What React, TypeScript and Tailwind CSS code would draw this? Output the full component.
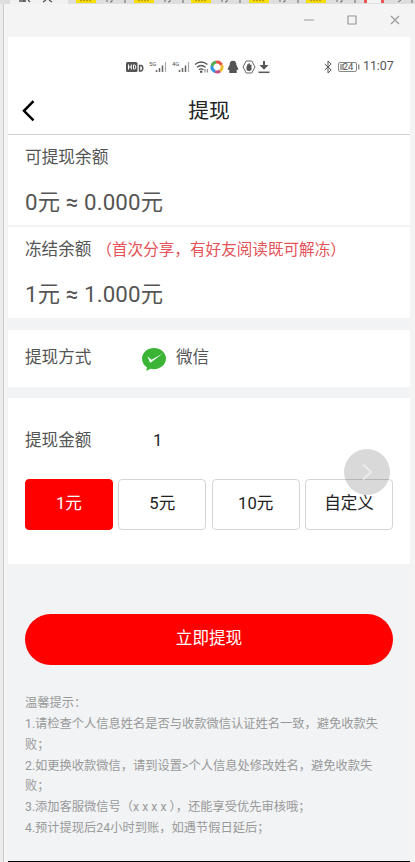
import React from 'react';

const amounts = ['1元', '5元', '10元', '自定义'];

const tips = [
  { text: '温馨提示：', cls: '' },
  { text: '1.请检查个人信息姓名是否与收款微信认证姓名一致，避免收款失', cls: '' },
  { text: '败；', cls: '' },
  { text: '2.如更换收款微信，请到设置>个人信息处修改姓名，避免收款失', cls: '' },
  { text: '败；', cls: '' },
  { text: '3.添加客服微信号（x x x x ），还能享受优先审核哦；', cls: '' },
  { text: '4.预计提现后24小时到账，如遇节假日延后；', cls: '' },
];

function BackgroundTabs() {
  return (
    <svg className="block h-1 w-full shrink-0" viewBox="0 0 415 4" preserveAspectRatio="none">
      <rect width="415" height="4" fill="#dedede" />
      <rect x="10" width="58" height="4" fill="#f1f1f1" />
      <path d="M19 1h7M24 0v2M28 0l2 2M46 0l-3 2M49 0l3 2" stroke="#555" strokeWidth="1.3" />
      {[76, 134, 191, 249, 306].map((x) => (
        <g key={x}>
          <rect x={x} width="20" height="3" fill="#f5df08" />
          <path d={`M${x + 4} .7h11`} stroke="#b58a10" strokeDasharray="2 1" />
          <path d={`M${x + 31} 0v2M${x + 36} 0q1 2-2 2M${x + 49} 0v3`} stroke="#666" fill="none" />
        </g>
      ))}
      <rect x="364" width="20" height="3" fill="#f4f4f4" />
      <path d="M365.500 0v3M382.500 0v3" stroke="#e95450" strokeWidth="3" />
      <path d="M401 0l-3 2M412 0v3" stroke="#666" />
    </svg>
  );
}

function Signal({ label }: { label: string }) {
  return (
    <svg width="19" height="14" viewBox="0 0 19 14">
      <text x="0" y="5.500" fontSize="6" fontFamily="Roboto, sans-serif" fill="#555">{label}</text>
      <path d="M7.500 10v2M10.500 8v4M13.500 5.500v6.500" stroke="#666" strokeWidth="1.5" />
      <path d="M16.500 2v10" stroke="#aaa" strokeWidth="1.2" />
    </svg>
  );
}

function StatusBar() {
  return (
    <div className="flex h-[58px] items-center pt-[1px] pl-[118px] text-[#555]">
      <svg width="20" height="14" viewBox="0 0 20 14">
        <rect x="0" y="2" width="11.500" height="10" rx="1.500" fill="#555" />
        <path d="M2.500 4.500v5M5.300 4.500v5M2.500 7h2.800M7.500 5v4h1q1.300 0 1.300-2t-1.300-2z" stroke="#fff" fill="none" />
        <path d="M13.500 5.500v5.500h1.300q2 0 2-2.750t-2-2.750z" stroke="#555" strokeWidth="1.400" fill="none" />
      </svg>
      <div className="ml-[3px] flex gap-1">
        <Signal label="5G" />
        <Signal label="4G" />
      </div>
      <svg className="ml-[3px]" width="15" height="14" viewBox="0 0 15 14" fill="none" stroke="#555" strokeWidth="1.300">
        <path d="M1 4.500q6-5 12.500 0M3 7.200q4.200-3.400 8.500 0M5 9.700q2.300-1.800 4.500 0" />
        <circle cx="7.200" cy="11.800" r=".6" fill="#555" />
        <path d="M11 9v3.500M13.300 9v3.500" strokeWidth=".8" />
      </svg>
      <svg className="ml-[1px]" width="14" height="14" viewBox="0 0 14 14" fill="none" strokeWidth="3">
        <path d="M2 6A5 5 0 0 1 6 2" stroke="#56ad55" />
        <path d="M6 2.200A5 5 0 0 1 11.500 5" stroke="#e65348" />
        <path d="M11.600 5A5 5 0 0 1 10 11" stroke="#eebc30" />
        <path d="M10 11A5 5 0 0 1 5 11.500" stroke="#c84b83" />
        <path d="M5 11.500A5 5 0 0 1 2 6" stroke="#3398dd" />
      </svg>
      <svg className="ml-[3px]" width="12" height="14" viewBox="0 0 12 14" fill="#555">
        <path d="M6 .8C3.500.8 2.600 2.500 2.600 5L1 8.300c-.6 1.500-.2 2.400.8 1.300l.8 1.400c-1 .5-.8 2 .5 2h5.800c1.300 0 1.500-1.500.5-2l.8-1.400c1 1.100 1.400.2.8-1.300L9.400 5C9.400 2.500 8.500.8 6 .8z" />
      </svg>
      <svg className="ml-[3px]" width="14" height="14" viewBox="0 0 14 14" fill="none" stroke="#666">
        <path d="M4.200 1h5.600L13 7l-3.200 6H4.200L1 7z" />
        <path d="M4.500 6.500v3.500q2.500 2 5 0V4.700H8V3.500H6.300v1H5v2z" fill="#555" stroke="none" />
      </svg>
      <svg className="ml-[2px]" width="12" height="14" viewBox="0 0 12 14" fill="none" stroke="#555">
        <path d="M6 1v7" strokeWidth="2" />
        <path d="M1.500 5h9L6 9.800z" fill="#555" stroke="none" />
        <path d="M.5 12.300h11" strokeWidth="1.500" />
      </svg>
      <svg className="ml-[54px]" width="9" height="14" viewBox="0 0 9 14" fill="none" stroke="#555">
        <path d="M.8 4l6.400 6L4 13V1l3.200 3L.8 10" />
      </svg>
      <svg className="ml-[5px]" width="22" height="12" viewBox="0 0 22 12">
        <rect x=".5" y="1.500" width="18" height="9" rx="1.500" fill="#fff" stroke="#888" />
        <rect x="2" y="3" width="4" height="6" fill="#aaa" />
        <path d="M20.800 3.500v5" stroke="#777" strokeWidth="1.200" />
        <text x="4.700" y="9.400" fontSize="9.500" fontFamily="Roboto, sans-serif" fill="#555">24</text>
      </svg>
      <span className="ml-[3px] text-[12.5px] leading-none tracking-[-0.1px]">11:07</span>
    </div>
  );
}

export default function App() {
  return (
    <div className="flex h-[862px] w-[415px] flex-col overflow-hidden bg-[#ebebeb] font-[Roboto,'Noto_Sans_CJK_SC',sans-serif] text-[#555] whitespace-nowrap">
      <BackgroundTabs />
      <div className="ml-[3px] flex min-h-0 flex-1 flex-col border-l border-[#cbcbcb] bg-[#f4f4f4]">
        <div className="flex h-[33px] shrink-0 items-center justify-end pr-[15px] pb-[1px]">
          <svg width="98" height="14" viewBox="0 0 98 14" fill="none" stroke="#999" strokeWidth="1.200">
            <path d="M2 7h10M46 3h8v8h-8zM89 3l8 8M97 3l-8 8" />
          </svg>
        </div>
        <div className="relative ml-1 flex w-[402px] min-h-0 flex-1 flex-col border-b border-black bg-[#f1f3f5]">
          <div className="h-[98px] shrink-0 border-b border-[#d2d2d2] bg-white">
            <StatusBar />
            <header className="grid h-[32px] grid-cols-[34px_1fr_34px] items-center">
              <svg className="ml-[13px]" width="16" height="22" viewBox="0 0 16 22" fill="none" stroke="#000" strokeWidth="2.500">
                <path d="M12.500 1.200L3 10.800l9.500 9.600" />
              </svg>
              <h1 className="text-center text-[20.8px] leading-8 text-[#222]">提现</h1>
            </header>
          </div>
          <section className="h-[92px] shrink-0 border-b-2 border-[#f4f4f4] bg-white pl-[17px] pt-[11px]">
            <p className="text-[16.7px] leading-6">可提现余额</p>
            <p className="mt-[16px] text-[22.3px] leading-8 tracking-[0.12px]">0元 ≈ 0.000元</p>
          </section>
          <section className="h-[91px] shrink-0 bg-white pl-[17px] pt-[11px]">
            <p className="flex text-[16.6px] leading-6">
              <span>冻结余额</span>
              <span className="ml-[5px] text-[15.6px] text-[#e45358]">（首次分享，有好友阅读既可解冻）</span>
            </p>
            <p className="mt-[16px] text-[22.3px] leading-8 tracking-[0.12px]">1元 ≈ 1.000元</p>
          </section>
          <section className="mt-3 flex h-[57px] shrink-0 items-center bg-white pl-[17px] text-[16.6px]">
            <span className="w-[117px]">提现方式</span>
            <svg width="24" height="24" viewBox="0 0 24 24">
              <path d="M12 1C5.400 1 0 5.800 0 11.500c0 4 2.200 7 5 8.900L4.300 24l4.200-2.200c1.100.2 2.200.4 3.500.4 6.600 0 12-4.900 12-10.700C24 5.800 18.600 1 12 1z" fill="#3bb435" />
              <path d="M5.500 9.500l4.200 3.300L21 6.300l-12.200 9.200q-.7.500-1-.4z" fill="#fff" />
            </svg>
            <span className="ml-[10px]">微信</span>
          </section>
          <section className="mt-[11px] h-[166px] shrink-0 bg-white px-[17px] pt-[31px]">
            <div className="flex h-6 items-center text-[16.6px]">
              <span className="w-[128px]">提现金额</span>
              <span className="text-[#222]">1</span>
            </div>
            <div className="mt-[26px] grid grid-cols-4 gap-[5.5px]">
              {amounts.map((amount, i) => (
                <button
                  key={amount}
                  className={
                    i === 0
                      ? 'h-[51px] rounded-[4px] border border-[#ff0000] bg-[#ff0000] text-[16.6px] text-white'
                      : 'h-[51px] rounded-[4px] border border-[#d3d5d8] bg-white text-[16.6px] text-[#222]'
                  }
                >
                  {amount}
                </button>
              ))}
            </div>
          </section>
          <button className="mx-[17px] mt-[50px] h-[51px] shrink-0 rounded-full bg-[#ff0000] text-[16.6px] text-white">立即提现</button>
          <div className="mt-[28px] pl-[17px] text-[12.25px] leading-[20.85px] text-[#999]">
            {tips.map((tip, i) => (
              <p key={i}>{tip.text}</p>
            ))}
          </div>
          <div className="absolute top-[412px] left-[336px] flex size-[46px] items-center justify-center rounded-full bg-black/15">
            <svg width="12" height="18" viewBox="0 0 12 18" fill="none" stroke="#f0f0f0" strokeWidth="1.600">
              <path d="M2 1.500L10 9l-8 7.500" />
            </svg>
          </div>
        </div>
      </div>
    </div>
  );
}
